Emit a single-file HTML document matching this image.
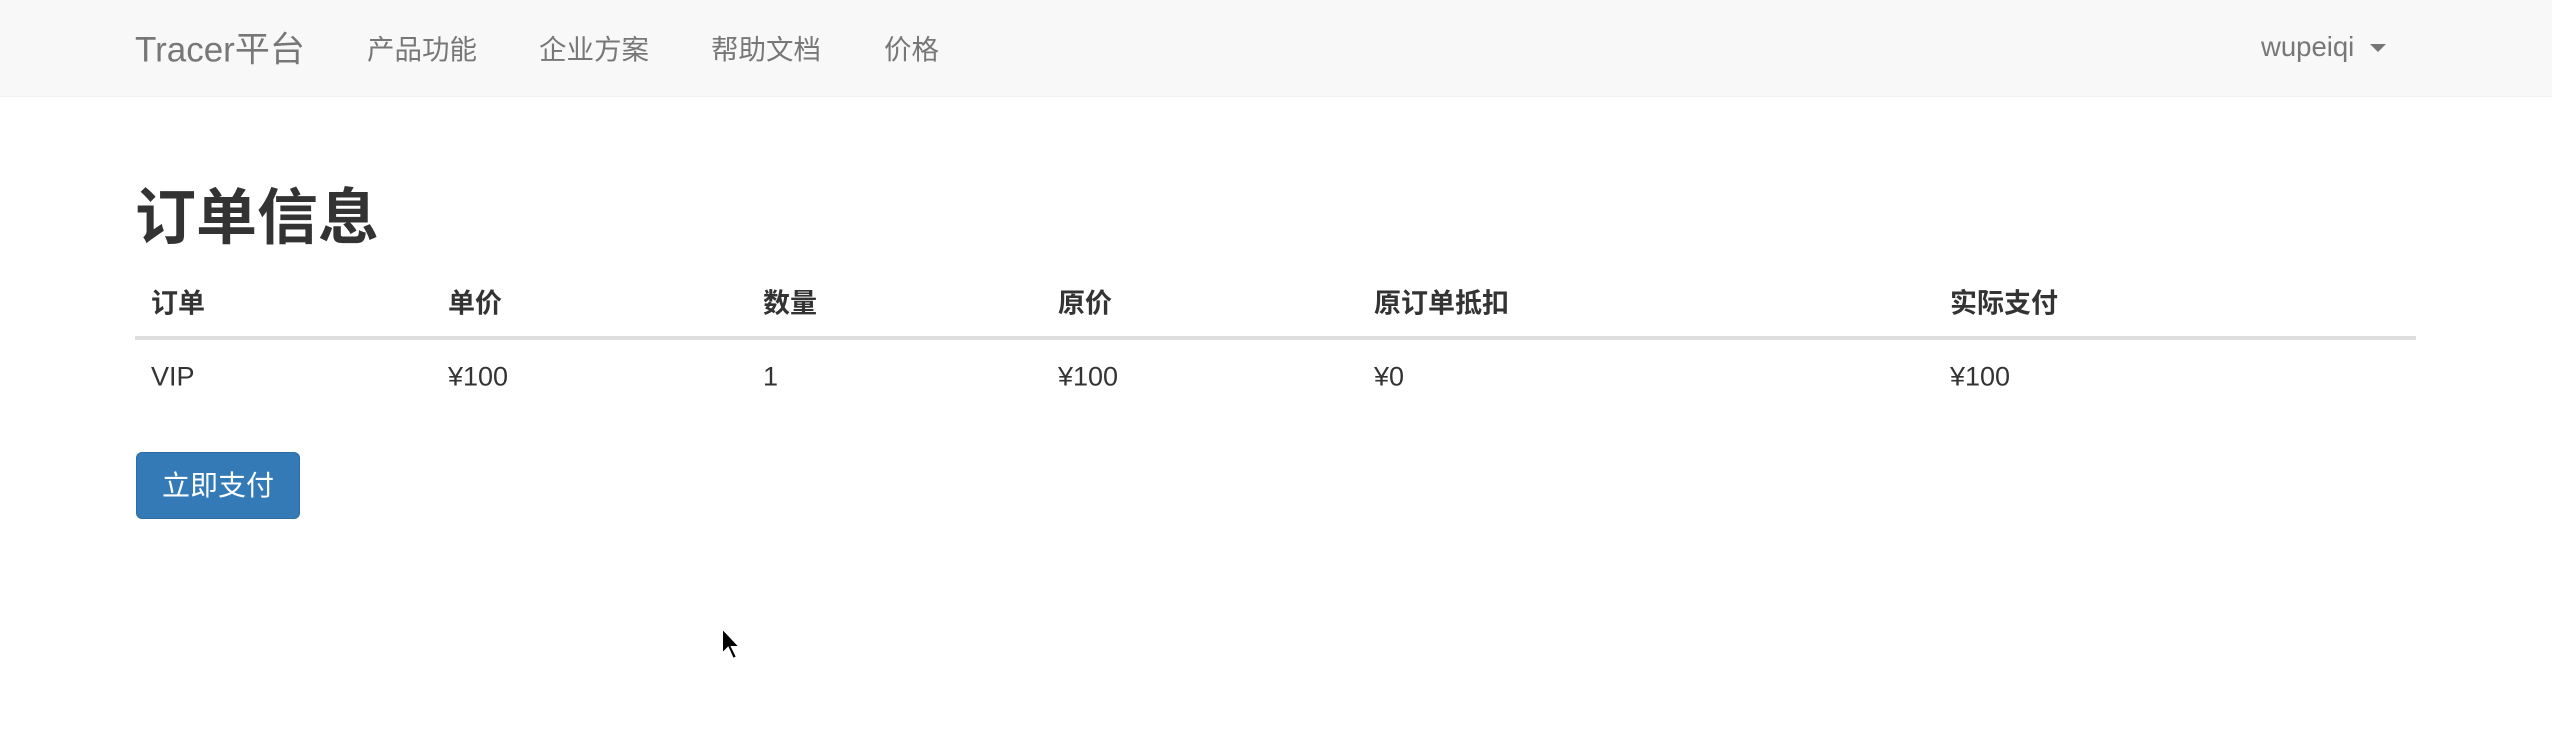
<!DOCTYPE html>
<html><head><meta charset="utf-8"><style>
*{margin:0;padding:0;box-sizing:border-box}
body{width:2552px;height:738px;background:#fff;font-family:"Liberation Sans","Noto Sans CJK SC",sans-serif;color:#333;position:relative;overflow:hidden}
.nav{position:absolute;left:0;top:0;width:2552px;height:97px;background:#f8f8f8;border-bottom:1px solid #f0f0f0}
.nav span{position:absolute;top:47px;transform:translateY(-50%);color:#777;font-size:27.5px;white-space:nowrap}
.nav .brand{font-size:35px}
h1{position:absolute;left:135px;top:212px;transform:translateY(-50%);font-size:61px;font-weight:bold;color:#333;white-space:nowrap}
.t{position:absolute;font-size:27px;transform:translateY(-50%);white-space:nowrap}
.th{top:301px;font-weight:bold}
.td{top:377px}
.line{position:absolute;left:135px;top:336px;width:2281px;height:4px;background:#ddd}
.btn{position:absolute;left:136px;top:452px;width:164px;height:67px;background:#337ab7;border:1px solid #2e6da4;border-radius:6px;color:#fff;font-size:28px;text-align:center;line-height:65px}
</style></head><body>
<div class="nav">
<span class="brand" style="left:135px">Tracer平台</span>
<span style="left:367px">产品功能</span>
<span style="left:539px">企业方案</span>
<span style="left:711px">帮助文档</span>
<span style="left:884px">价格</span>
<span style="left:2261px">wupeiqi</span>
<svg style="position:absolute;left:2370px;top:44px" width="16" height="9"><polygon points="0,0 16,0 8,8" fill="#777"/></svg>
</div>
<h1>订单信息</h1>
<div class="t th" style="left:151px">订单</div>
<div class="t th" style="left:448px">单价</div>
<div class="t th" style="left:763px">数量</div>
<div class="t th" style="left:1058px">原价</div>
<div class="t th" style="left:1374px">原订单抵扣</div>
<div class="t th" style="left:1950px">实际支付</div>
<div class="line"></div>
<div class="t td" style="left:151px">VIP</div>
<div class="t td" style="left:448px">¥100</div>
<div class="t td" style="left:763px">1</div>
<div class="t td" style="left:1058px">¥100</div>
<div class="t td" style="left:1374px">¥0</div>
<div class="t td" style="left:1950px">¥100</div>
<div class="btn">立即支付</div>
<svg style="position:absolute;left:720px;top:626px" width="24" height="36" viewBox="0 0 24 36"><path d="M2 2 L2 28 L8 22 L13 33 L17 31 L12 21 L20 21 Z" fill="#000" stroke="#fff" stroke-width="2"/></svg>
</body></html>
